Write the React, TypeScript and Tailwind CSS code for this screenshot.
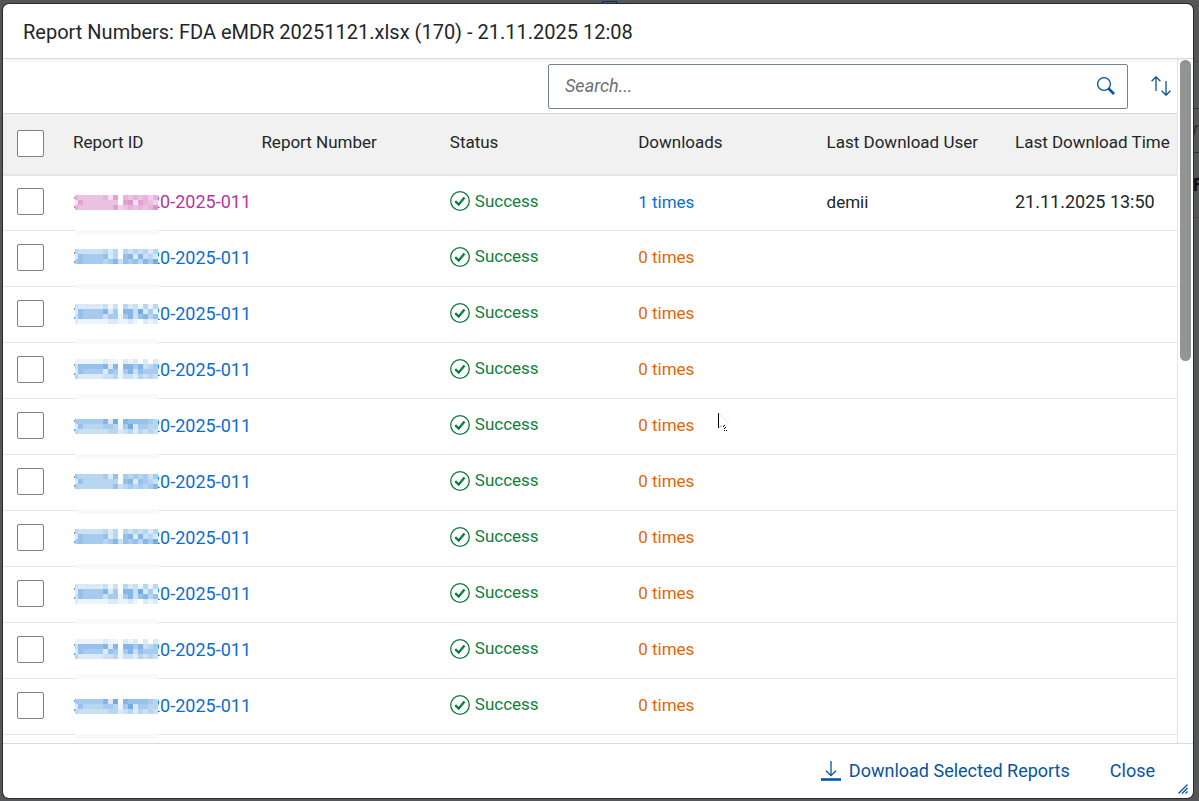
import { useState } from 'react';

type Row = {
  tone: 'visited' | 'link';
  downloads: number;
  user?: string;
  time?: string;
};

const rows: Row[] = [
  { tone: 'visited', downloads: 1, user: 'demii', time: '21.11.2025 13:50' },
  { tone: 'link', downloads: 0 },
  { tone: 'link', downloads: 0 },
  { tone: 'link', downloads: 0 },
  { tone: 'link', downloads: 0 },
  { tone: 'link', downloads: 0 },
  { tone: 'link', downloads: 0 },
  { tone: 'link', downloads: 0 },
  { tone: 'link', downloads: 0 },
  { tone: 'link', downloads: 0 },
];

const columns = ['Report ID', 'Report Number', 'Status', 'Downloads', 'Last Download User', 'Last Download Time'];

// Tile strength 0-9; the 5px tile grid does not divide the 56px rows, so the pattern repeats every five rows
const tileSets = [
  { top: 19, lines: ['54444452605454535', '26444444406726543', '54444444634545457'] },
  { top: 18, lines: ['43333342404343424', '26555562406727342', '56555545736564758'] },
  { top: 17, lines: ['32222231304231414', '26555572507738251', '36555535515736746', '21111112211210212'] },
  { top: 16, lines: ['11111121102120202', '36666672707757345', '26555526515736555', '42222233413324343'] },
  { top: 20, lines: ['55555572807666654', '26444455415825544', '43333334423424343'] },
];

const tileColors = { visited: '#c0399f', link: '#1a78d2' };

function Redaction({ tone, index }: { tone: Row['tone']; index: number }) {
  const { top, lines } = tileSets[index % tileSets.length];
  const color = tileColors[tone];
  return (
    <svg
      className="pointer-events-none absolute top-0 left-[9px] z-10"
      width="84"
      height="62"
      viewBox="0 0 84 62"
      shapeRendering="crispEdges"
      aria-hidden="true"
    >
      <rect x="1" y={top} width="83" height={lines.length * 5} fill="#fff" />
      <path d="M0 21h1v2H0zM0 30h1v2H0z" fill={color} opacity="0.7" />
      {lines.map((line, y) =>
        line.split('').map((level, x) => (
          <rect
            key={`${x}-${y}`}
            x={x === 0 ? 1 : x * 5 - 1}
            y={top + y * 5}
            width={x === 0 ? 3 : 5}
            height="5"
            fill={color}
            opacity={Number(level) / 13}
          />
        ))
      )}
      <rect x="1" y={top + 35} width="83" height="5" fill="#f9f9f9" />
    </svg>
  );
}

function SuccessIcon() {
  return (
    <svg width="20" height="20" viewBox="0 0 20 20" fill="none" stroke="currentColor" aria-hidden="true">
      <circle cx="10" cy="10" r="9.3" strokeWidth="1.3" />
      <path d="M5.2 10.2 8.7 13.5 14.5 6.6" strokeWidth="2.4" />
    </svg>
  );
}

function Checkbox({ label }: { label: string }) {
  return (
    <input
      type="checkbox"
      aria-label={label}
      className="block size-[27px] appearance-none rounded-xs border border-[#758398] bg-white checked:bg-[#0064d9]"
    />
  );
}

export default function App() {
  const [query, setQuery] = useState('');

  return (
    <div className="relative h-screen overflow-hidden bg-[#555657] pt-1 pr-1.5 pb-[3px] pl-[3px] font-['Roboto','Liberation_Sans',sans-serif]">
      {/* Dimmed page behind the dialog */}
      <div className="absolute inset-0" aria-hidden="true">
        <div className="absolute top-px left-[602px] h-4 w-[15px] border border-[#06335f]" />
        <div className="absolute top-0 right-0 h-full w-1.5 overflow-hidden text-lg leading-6 text-[#0c1014]">
          <div className="h-[62px] border-b border-[#4a4a4b]" />
          <div className="h-[47px] border-b border-[#2b3138]" />
          <div className="h-11 border-b border-[#2b3138] pt-2 text-[#2c2e30] italic">ra</div>
          <div className="h-[65px] border-b border-[#4a4a4b] pt-5 font-bold">Fi</div>
        </div>
      </div>

      <div
        role="dialog"
        aria-labelledby="dialog-title"
        className="relative flex h-full flex-col rounded-md bg-white text-lg text-[#222629] shadow-[0_0_0_1px_#2b2b2b]"
      >
        <header className="z-10 flex h-[55px] shrink-0 items-center border-b border-[#d9d9d9] px-5 pt-0.5 shadow-[0_2px_4px_#0000000f]">
          <h1 id="dialog-title" className="text-xl">
            Report Numbers: FDA eMDR 20251121.xlsx (170) - 21.11.2025 12:08
          </h1>
        </header>

        <div className="flex min-h-0 flex-1">
          <main className="min-w-0 flex-1 overflow-hidden border-r border-[#e5e5e5]">
            <div className="flex h-[54px] items-center justify-end pr-1">
              <div className="flex h-[45px] w-[580px] items-center rounded-xs border border-[#758398] pr-3 pl-4">
                <input
                  type="text"
                  aria-label="Search"
                  placeholder="Search..."
                  value={query}
                  onChange={(e) => setQuery(e.target.value)}
                  className="min-w-0 flex-1 outline-none placeholder:text-[#6c7074] placeholder:italic"
                />
                <button aria-label="Run search" className="text-[#0854a0]">
                  <svg width="18" height="18" viewBox="0 0 18 18" fill="none" stroke="currentColor" aria-hidden="true">
                    <circle cx="7" cy="7" r="6.4" strokeWidth="1.3" />
                    <path d="m11.5 11.5 5.5 5.5" strokeWidth="2.6" />
                  </svg>
                </button>
              </div>
              <button aria-label="Sort" className="ml-[21px] px-0.5 text-[#0854a0]">
                <svg width="20" height="20" viewBox="0 0 20 20" fill="none" stroke="currentColor" strokeWidth="1.3" aria-hidden="true">
                  <path d="M5 15V.8M.6 5.2 5 .8l4.4 4.4M15 5v14.2M10.6 14.8l4.4 4.4 4.4-4.4" />
                </svg>
              </button>
            </div>

            <table className="w-full table-fixed border-collapse text-left">
              <colgroup>
                <col className="w-[62px]" />
                <col />
                <col />
                <col />
                <col />
                <col />
                <col className="w-[170px]" />
              </colgroup>
              <thead>
                <tr className="h-[61px] border-t border-b-2 border-t-[#d9d9d9] border-b-[#e5e5e5] bg-[#f1f1f1]">
                  <th className="pl-3.5">
                    <Checkbox label="Select all reports" />
                  </th>
                  {columns.map((column) => (
                    <th key={column} className="pb-1 pl-2 text-[17px] font-normal whitespace-nowrap">
                      {column}
                    </th>
                  ))}
                </tr>
              </thead>
              <tbody>
                {rows.map((row, index) => (
                  <tr key={index} className="h-14 border-b border-[#e5e5e5]">
                    <td className="pb-0.5 pl-3.5">
                      <Checkbox label={`Select report ${index + 1}`} />
                    </td>
                    <td className="relative pb-0.5 pl-2">
                      <Redaction tone={row.tone} index={index} />
                      <a
                        href="#report"
                        className={`pl-[77px] whitespace-nowrap ${
                          row.tone === 'visited' ? 'text-[#b8359a]' : 'text-[#0a6ed1]'
                        }`}
                      >
                        20-2025-011
                      </a>
                    </td>
                    <td />
                    <td className="pb-1 pl-2 text-[17px]">
                      <span className="flex items-center gap-[5px] text-[#107e3e]">
                        <SuccessIcon />
                        Success
                      </span>
                    </td>
                    <td className={`pb-0.5 pl-2 text-[17px] ${row.downloads > 0 ? 'text-[#0a6ed1]' : 'text-[#e76500]'}`}>
                      {row.downloads} times
                    </td>
                    <td className="pb-0.5 pl-2 text-[17px]">{row.user}</td>
                    <td className="pb-0.5 pl-2">{row.time}</td>
                  </tr>
                ))}
              </tbody>
            </table>
          </main>

          {/* Scrollbar */}
          <div className="w-[15px] shrink-0 px-0.5 pt-px">
            <div className="h-[301px] rounded-full bg-[#949494]" />
          </div>
        </div>

        <footer className="flex h-[55px] shrink-0 items-center justify-end gap-10 border-t border-[#d9d9d9] pr-[38px] text-[#0854a0]">
          <button className="flex items-center gap-2">
            <svg width="20" height="20" viewBox="0 0 20 20" fill="none" stroke="currentColor" aria-hidden="true">
              <path d="M10 0v14.5M5 9.8l5 4.8 5-4.8" strokeWidth="1.3" />
              <path d="M0 18.5h20" strokeWidth="2.6" />
            </svg>
            Download Selected Reports
          </button>
          <button>Close</button>
        </footer>

        {/* Resize handle */}
        <svg className="absolute right-[5px] bottom-1 text-[#0854a0]" width="10" height="10" viewBox="0 0 10 10" stroke="currentColor" strokeWidth="1.3" aria-hidden="true">
          <path d="M.5 9.5l9-9M4 9.5 9.5 4M7.5 9.5l2-2" />
        </svg>

        {/* Mouse pointer */}
        <svg className="pointer-events-none absolute top-[409px] left-[715px]" width="13" height="20" viewBox="0 0 13 20" aria-hidden="true">
          <path d="M.5 0v15" stroke="#000" />
          <path d="m1 .5 10.5 11" stroke="#ccc" strokeDasharray="1 1" />
          <path d="M1 14.5l3-2" stroke="#aaa" />
          <path d="M6 12h1v1H6zM5 13h1v1H5zM6 15h1v1H6zM7 14h1v1H7zM6 17h1v1H6zM8 17h1v1H8z" />
        </svg>
      </div>
    </div>
  );
}
